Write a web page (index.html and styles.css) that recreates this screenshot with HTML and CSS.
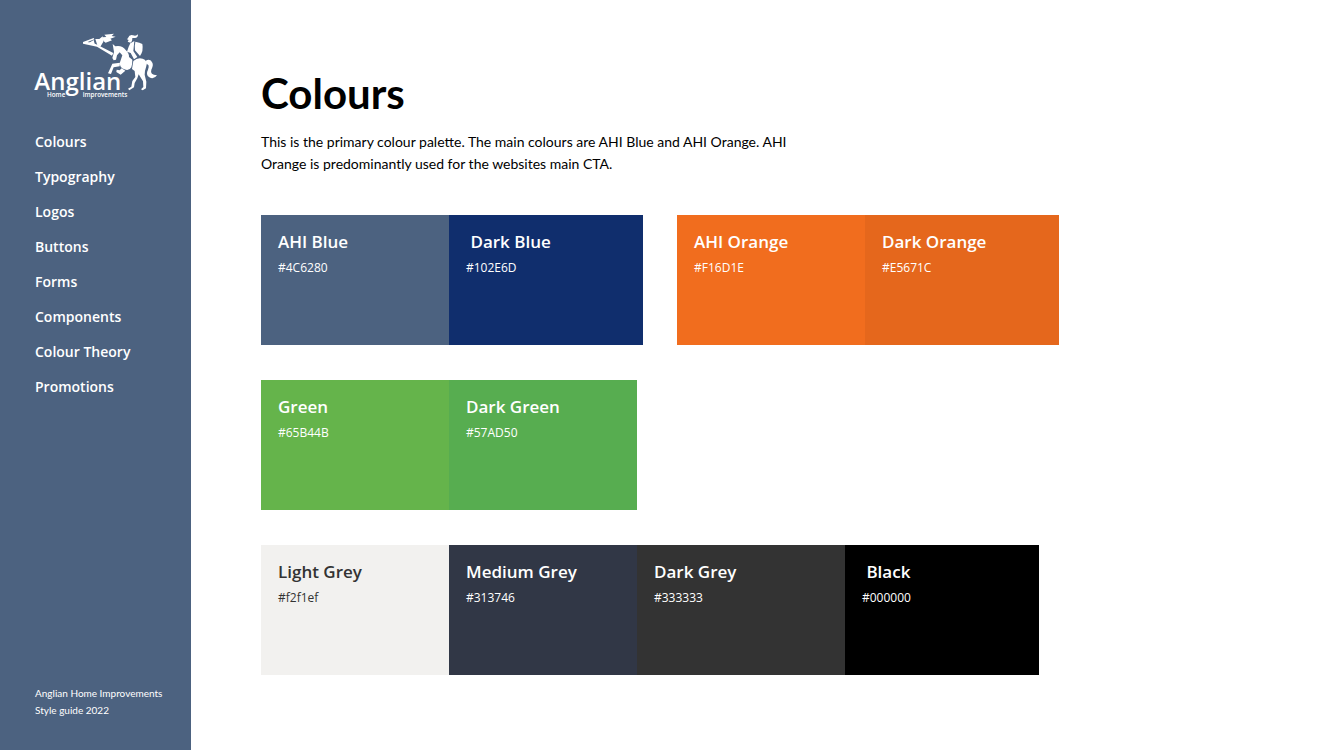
FILE: index.html
```html
<!DOCTYPE html>
<html lang="en">
<head>
    <meta charset="UTF-8">
    <meta name="viewport" content="width=device-width, initial-scale=1.0">
    <title>Anglian Home Improvements - Style guide</title>
    <link rel="stylesheet" href="styles.css">
</head>
<body>
    <aside class="sidebar">
        <a href="#" class="logo" aria-label="Anglian Home Improvements">
            <svg viewBox="30 24 372 201" fill="#fff">
                <!-- lance and pennant -->
                <path d="M174 51 L206 39 L208 43 L188 51 L212 57 L265 84 L261 92 L216 65 L174 56 Z"/>
                <path d="M191 54 L206 45 L210 60 Z"/>
                <path d="M211 42 L223 42 L233 34 L235 50 L226 65 L217 61 Z"/>
                <path d="M232 37 L244 36 L238 29 L267 26 L260 33 L272 35 L256 41 L261 46 L242 53 L235 48 Z"/>
                <!-- rider -->
                <path d="M309 39 Q313 28 324 31 Q333 35 339 28 Q339 41 327 39 L322 39 Q322 51 316 53 L308 50 L311 45 L306 43 Z"/>
                <path d="M316 55 L328 48 L325 78 L337 96 L327 103 L317 84 L306 80 L311 65 Z"/>
                <path d="M331 50 Q344 53 352 57 Q356 78 345 93 L330 76 Q328 64 331 50 Z"/>
                <!-- horse head, neck and chest -->
                <path d="M263 57 L271 64 Q291 60 302 75 Q313 86 312 96 L322 104 Q322 120 319 127 Q312 139 298 133 Q283 128 285 112 L292 91 L284 82 L276 91 L273 104 L266 106 L262 99 L267 81 Z"/>
                <!-- front legs -->
                <path d="M285 113 L262 116 L256 130 L249 145 L258 147 L266 127 L284 124 Z"/>
                <path d="M290 130 L284 136 L275 134 L274 141 L287 149 L301 137 Z"/>
                <!-- hindquarters and back legs -->
                <path d="M325 108 Q338 96 353 101 Q368 106 364 123 Q359 138 359 149 L364 170 L363 190 L353 196 L348 193 L355 186 L354 169 L341 148 L337 160 L329 174 L327 187 L313 196 L309 191 L319 185 L322 168 L331 156 L329 138 L321 132 Z"/>
                <!-- tail -->
                <path d="M361 108 Q376 99 382 113 Q386 120 379 134 Q374 149 396 151 Q386 165 373 157 Q361 149 369 134 Q375 118 364 117 Z"/>
                <text x="28" y="195" class="logo-name">Anglian</text>
                <text x="66" y="216" class="logo-sub">Home</text>
                <text x="173" y="216" class="logo-sub">improvements</text>
            </svg>
        </a>
        <nav class="menu">
            <a href="#colours">Colours</a>
            <a href="#typography">Typography</a>
            <a href="#logos">Logos</a>
            <a href="#buttons">Buttons</a>
            <a href="#forms">Forms</a>
            <a href="#components">Components</a>
            <a href="#theory">Colour Theory</a>
            <a href="#promotions">Promotions</a>
        </nav>
        <p class="credit">Anglian Home Improvements<br>Style guide 2022</p>
    </aside>

    <main class="content" id="colours">
        <h1>Colours</h1>
        <p class="intro">This is the primary colour palette. The main colours are AHI Blue and AHI Orange. AHI Orange is predominantly used for the websites main CTA.</p>

        <div class="palettes">
            <div class="palette">
                <div class="swatch ahi-blue">
                    <h2>AHI Blue</h2>
                    <p>#4C6280</p>
                </div>
                <div class="swatch wide dark-blue">
                    <h2>&nbsp;Dark Blue</h2>
                    <p>#102E6D</p>
                </div>
            </div>
            <div class="palette">
                <div class="swatch ahi-orange">
                    <h2>AHI Orange</h2>
                    <p>#F16D1E</p>
                </div>
                <div class="swatch wide dark-orange">
                    <h2>Dark Orange</h2>
                    <p>#E5671C</p>
                </div>
            </div>
        </div>

        <div class="palettes">
            <div class="palette">
                <div class="swatch green">
                    <h2>Green</h2>
                    <p>#65B44B</p>
                </div>
                <div class="swatch dark-green">
                    <h2>Dark Green</h2>
                    <p>#57AD50</p>
                </div>
            </div>
        </div>

        <div class="palettes">
            <div class="palette">
                <div class="swatch light-grey">
                    <h2>Light Grey</h2>
                    <p>#f2f1ef</p>
                </div>
                <div class="swatch medium-grey">
                    <h2>Medium Grey</h2>
                    <p>#313746</p>
                </div>
                <div class="swatch wider dark-grey">
                    <h2>Dark Grey</h2>
                    <p>#333333</p>
                </div>
                <div class="swatch wide black">
                    <h2>&nbsp;Black</h2>
                    <p>#000000</p>
                </div>
            </div>
        </div>
    </main>
</body>
</html>
```
FILE: styles.css
```css
* {
    box-sizing: border-box;
}
body {
    margin: 0;
    display: flex;
    min-height: 100vh;
    font-family: "Open Sans", "Noto Sans", sans-serif;
    color: #000;
    background: #fff;
}
h1, h2, p {
    margin: 0;
}

/* Sidebar */
.sidebar {
    display: flex;
    flex-direction: column;
    flex: 0 0 191px;
    padding: 33px 0 31px 35px;
    background: #4c6280;
    color: #fff;
}
.logo svg {
    display: block;
    width: 124px;
    height: 67px;
    overflow: visible;
}
.logo-name {
    font-size: 72px;
    font-weight: 600;
}
.logo-sub {
    font-size: 19px;
    font-weight: 600;
}
.menu {
    display: flex;
    flex-direction: column;
    gap: 15px;
    margin-top: 32px;
}
.menu a {
    color: #fff;
    font-size: 14px;
    font-weight: 600;
    line-height: 20px;
    text-decoration: none;
}
.menu a:hover {
    text-decoration: underline;
}
.credit {
    margin-top: auto;
    font-family: Lato, sans-serif;
    font-size: 10px;
    line-height: 17px;
}

/* Main content */
.content {
    flex: 1;
    padding: 64px 70px 75px;
}
h1 {
    font-family: Lato, sans-serif;
    font-size: 42px;
    font-weight: 700;
    line-height: 58px;
}
.intro {
    max-width: 550px;
    margin: 9px 0 40px;
    font-family: Lato, sans-serif;
    font-size: 14px;
    line-height: 22px;
}
.palettes {
    display: flex;
    flex-wrap: wrap;
    gap: 34px;
    margin-bottom: 35px;
}
.palettes:last-child {
    margin-bottom: 0;
}
.palette {
    display: flex;
}
.swatch {
    width: 188px;
    min-height: 130px;
    padding: 15px 17px;
    color: #fff;
}
.swatch.wide {
    width: 194px;
}
.swatch.wider {
    width: 208px;
}
.swatch h2 {
    font-size: 17px;
    font-weight: 600;
    line-height: 24px;
}
.swatch p {
    margin-top: 5px;
    font-size: 12px;
    line-height: 18px;
}
.ahi-blue { background: #4c6280; }
.dark-blue { background: #102e6d; }
.ahi-orange { background: #f16d1e; }
.dark-orange { background: #e5671c; }
.green { background: #65b44b; }
.dark-green { background: #57ad50; }
.light-grey { background: #f2f1ef; color: #333; }
.medium-grey { background: #313746; }
.dark-grey { background: #333; }
.black { background: #000; }
```
